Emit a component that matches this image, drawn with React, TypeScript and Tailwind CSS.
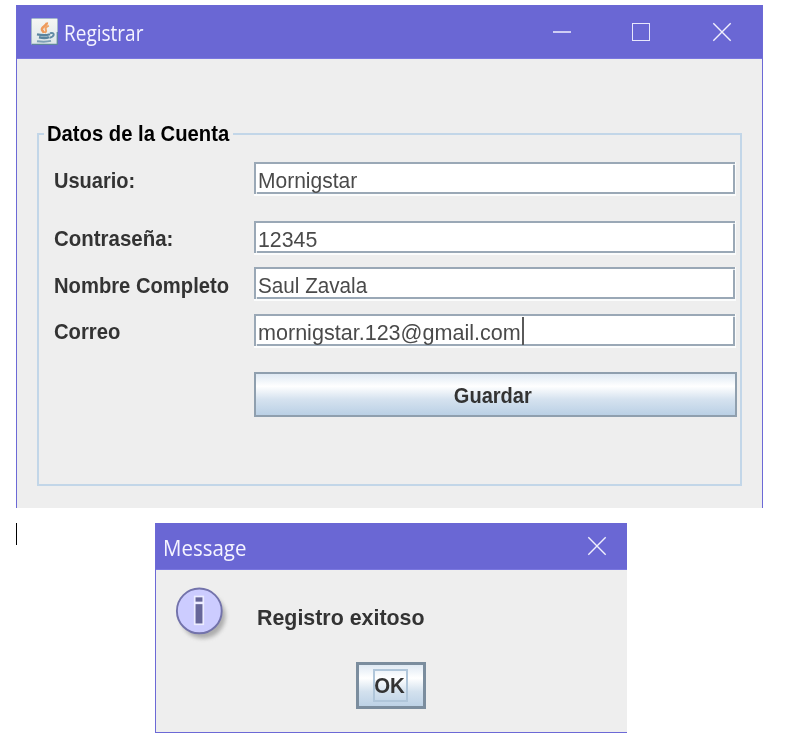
import React from "react";

const sans = "font-['Liberation_Sans',Arial,sans-serif]";
const title = "font-['Open_Sans','Noto_Sans',sans-serif]";
const bold = "inline-block origin-left whitespace-nowrap text-[22px] font-bold leading-[26px]";

function JavaIcon() {
  return (
    <svg width="28" height="28" viewBox="0 0 28 28" className="shrink-0">
      <defs>
        <linearGradient id="tile" x1="0" y1="0" x2="0" y2="1">
          <stop offset="0" stopColor="#f5f6f3" />
          <stop offset="1" stopColor="#dde6e9" />
        </linearGradient>
      </defs>
      <rect x="0.5" y="0.5" width="26" height="26" rx="1" fill="url(#tile)" stroke="#a3b7ca" strokeWidth="1" />
      <path d="M1 26.3H26.3V14" fill="none" stroke="#5f869d" strokeWidth="1.3" />
      <path d="M15.8 4.5C16.4 7.6 10 9 11 11.8C11.5 13 12.6 13.4 13 15" fill="none" stroke="#ee9a5b" strokeWidth="2.6" />
      <path d="M17.8 7.6C14 9.4 14.2 10.8 15 12C15.7 13.2 14.8 14 14 15" fill="none" stroke="#f0a264" strokeWidth="2" />
      <path d="M6 16.4C10 17.2 16 17.2 19 16.2" fill="none" stroke="#5b859f" strokeWidth="2.2" />
      <path d="M8 19.3C12 20.1 15.5 20.1 18 19.1" fill="none" stroke="#5b859f" strokeWidth="2.6" />
      <path d="M19 15.2C24 13.8 24 18.4 18.5 19.8" fill="none" stroke="#628ba5" strokeWidth="2" />
      <path d="M6 23.2C10 23.7 16.5 23.7 20 22.9" fill="none" stroke="#7d9fb6" strokeWidth="2" />
    </svg>
  );
}

function CloseIcon() {
  return (
    <svg width="20" height="20" viewBox="0 0 20 20" className="shrink-0">
      <path d="M1.3 1.3L18.7 18.7M18.7 1.3L1.3 18.7" stroke="#f1f0fd" strokeWidth="1.4" fill="none" />
    </svg>
  );
}

function InfoIcon() {
  return (
    <svg width="60" height="60" viewBox="0 0 60 60" className="shrink-0">
      <defs>
        <filter id="shade" x="-30%" y="-30%" width="160%" height="160%">
          <feGaussianBlur stdDeviation="2.2" />
        </filter>
      </defs>
      <circle cx="28" cy="29" r="22.5" fill="#777" opacity="0.55" filter="url(#shade)" />
      <circle cx="24.3" cy="23.9" r="22.4" fill="#ccccff" stroke="#7373ab" strokeWidth="1.9" />
      <rect x="19.7" y="9.5" width="8.6" height="6" fill="#666699" stroke="#ececff" strokeWidth="1.7" />
      <rect x="19.7" y="16.3" width="8.6" height="21" fill="#666699" stroke="#ececff" strokeWidth="1.7" />
    </svg>
  );
}

function Row({ label, value, scale, valueScale, gap, textTop, caret = false }: {
  label: string; value: string; scale: string; valueScale: string; gap: string; textTop: string; caret?: boolean;
}) {
  return (
    <div className={`flex h-[34px] ${gap}`}>
      <div className={`w-[200px] shrink-0 ${textTop}`}>
        <span className={`${bold} text-[#333] ${scale}`}>{label}</span>
      </div>
      <div className="h-[34px] w-[482px] border-b-2 border-r border-[#fbfcfc]">
        <div className="relative h-[32px] w-[481px] border-2 border-[#9aa8b6] bg-white pl-[2px] pt-[4px]">
          <span className={`block w-max origin-left whitespace-nowrap text-[22px] leading-[26px] text-[#4a4a4a] ${valueScale}`}>{value}</span>
          {caret && <span className="absolute left-[266px] top-px h-[28px] w-[2px] bg-[#5a5a5a]" />}
          <span className="absolute -bottom-[2px] left-0 h-[2px] w-px bg-[#e8ecef]" />
          <span className="absolute -right-[2px] top-0 h-px w-[2px] bg-[#e8ecef]" />
        </div>
      </div>
    </div>
  );
}

export default function App() {
  return (
    <div className={`h-[747px] w-[792px] overflow-hidden bg-white pt-[5px] ${sans}`}>
      <div className="ml-4 h-[503px] w-[747px] border-x border-[#6c69d6] bg-[#eeeeee]">
        <div className="flex h-[54px] items-center border-b border-[#7a77df] bg-[#6a67d4] pl-[14px] pr-[30px]">
          <JavaIcon />
          <span className={`ml-[5px] inline-block origin-left scale-x-[0.905] pt-[2px] text-[21px] leading-[28px] text-[#f5f4ff] ${title}`}>Registrar</span>
          <div className="ml-auto flex items-center gap-[61px]">
            <span className="h-[2px] w-[18px] bg-[#cfcdf4]" />
            <span className="mr-px h-[18px] w-[18px] border border-[#e8e7fc]" />
            <CloseIcon />
          </div>
        </div>
        <fieldset className="ml-5 mt-[62px] h-[365px] w-[705px] border-2 border-[#c2d6e8] pl-[15px]">
          <legend className="-ml-[10px] h-[26px] w-[189px] pl-[3px]">
            <span className={`${bold} scale-x-[0.92] text-black`}>Datos de la Cuenta</span>
          </legend>
          <Row label="Usuario:" value="Mornigstar" scale="scale-x-[0.91]" valueScale="scale-x-[0.955]" gap="mt-[15px]" textTop="pt-[6px]" />
          <Row label="Contraseña:" value="12345" scale="scale-x-[0.93]" valueScale="scale-x-[0.97]" gap="mt-[25px]" textTop="pt-[5px]" />
          <Row label="Nombre Completo" value="Saul Zavala" scale="scale-x-[0.918]" valueScale="scale-x-[0.94]" gap="mt-[12px]" textTop="pt-[6px]" />
          <Row label="Correo" value="mornigstar.123@gmail.com" scale="scale-x-[0.92]" valueScale="scale-x-[0.98]" gap="mt-[13px]" textTop="pt-[5px]" caret />
          <button className="ml-[200px] mt-[24px] flex h-[45px] w-[483px] items-center justify-center border-2 border-[#8f9fae] bg-[linear-gradient(180deg,#dfe9f3_0%,#ffffff_30%,#d5e2ef_62%,#bad0e5_100%)] pr-[5px] pt-[2px]">
            <span className="inline-block scale-x-[0.91] text-[22px] font-bold leading-[26px] text-[#333]">Guardar</span>
          </button>
        </fieldset>
      </div>
      <div className="flex pl-4 pt-[15px]">
        <span className="h-[22px] w-px bg-black" />
        <div className="ml-[138px] h-[210px] w-[472px] border-b border-l border-[#6c69d6] bg-[#eeeeee]">
          <div className="flex h-[47px] items-center justify-between border-b border-[#7a77df] bg-[#6a67d4] pl-[7px] pr-5">
            <span className={`inline-block origin-left scale-x-[0.975] pt-[3px] text-[21px] leading-[28px] text-[#f5f4ff] ${title}`}>Message</span>
            <CloseIcon />
          </div>
          <div className="flex h-[92px] pl-[19px] pt-[17px]">
            <InfoIcon />
            <div className="ml-[22px] pt-[18px]">
              <span className={`${bold} scale-x-[0.972] text-[#333]`}>Registro exitoso</span>
            </div>
          </div>
          <button className="ml-[200px] flex h-[47px] w-[70px] items-center justify-center border-[3px] border-[#7b8d9e] bg-[linear-gradient(180deg,#e0eaf4_0%,#ffffff_32%,#d3e1ee_65%,#bdd2e6_100%)] pr-[2px]">
            <span className="flex h-[33px] w-[35px] items-center justify-center border-2 border-[#b0c6da] pr-px">
              <span className="inline-block scale-x-[0.93] text-[22px] font-bold leading-[26px] text-[#333]">OK</span>
            </span>
          </button>
        </div>
      </div>
    </div>
  );
}
